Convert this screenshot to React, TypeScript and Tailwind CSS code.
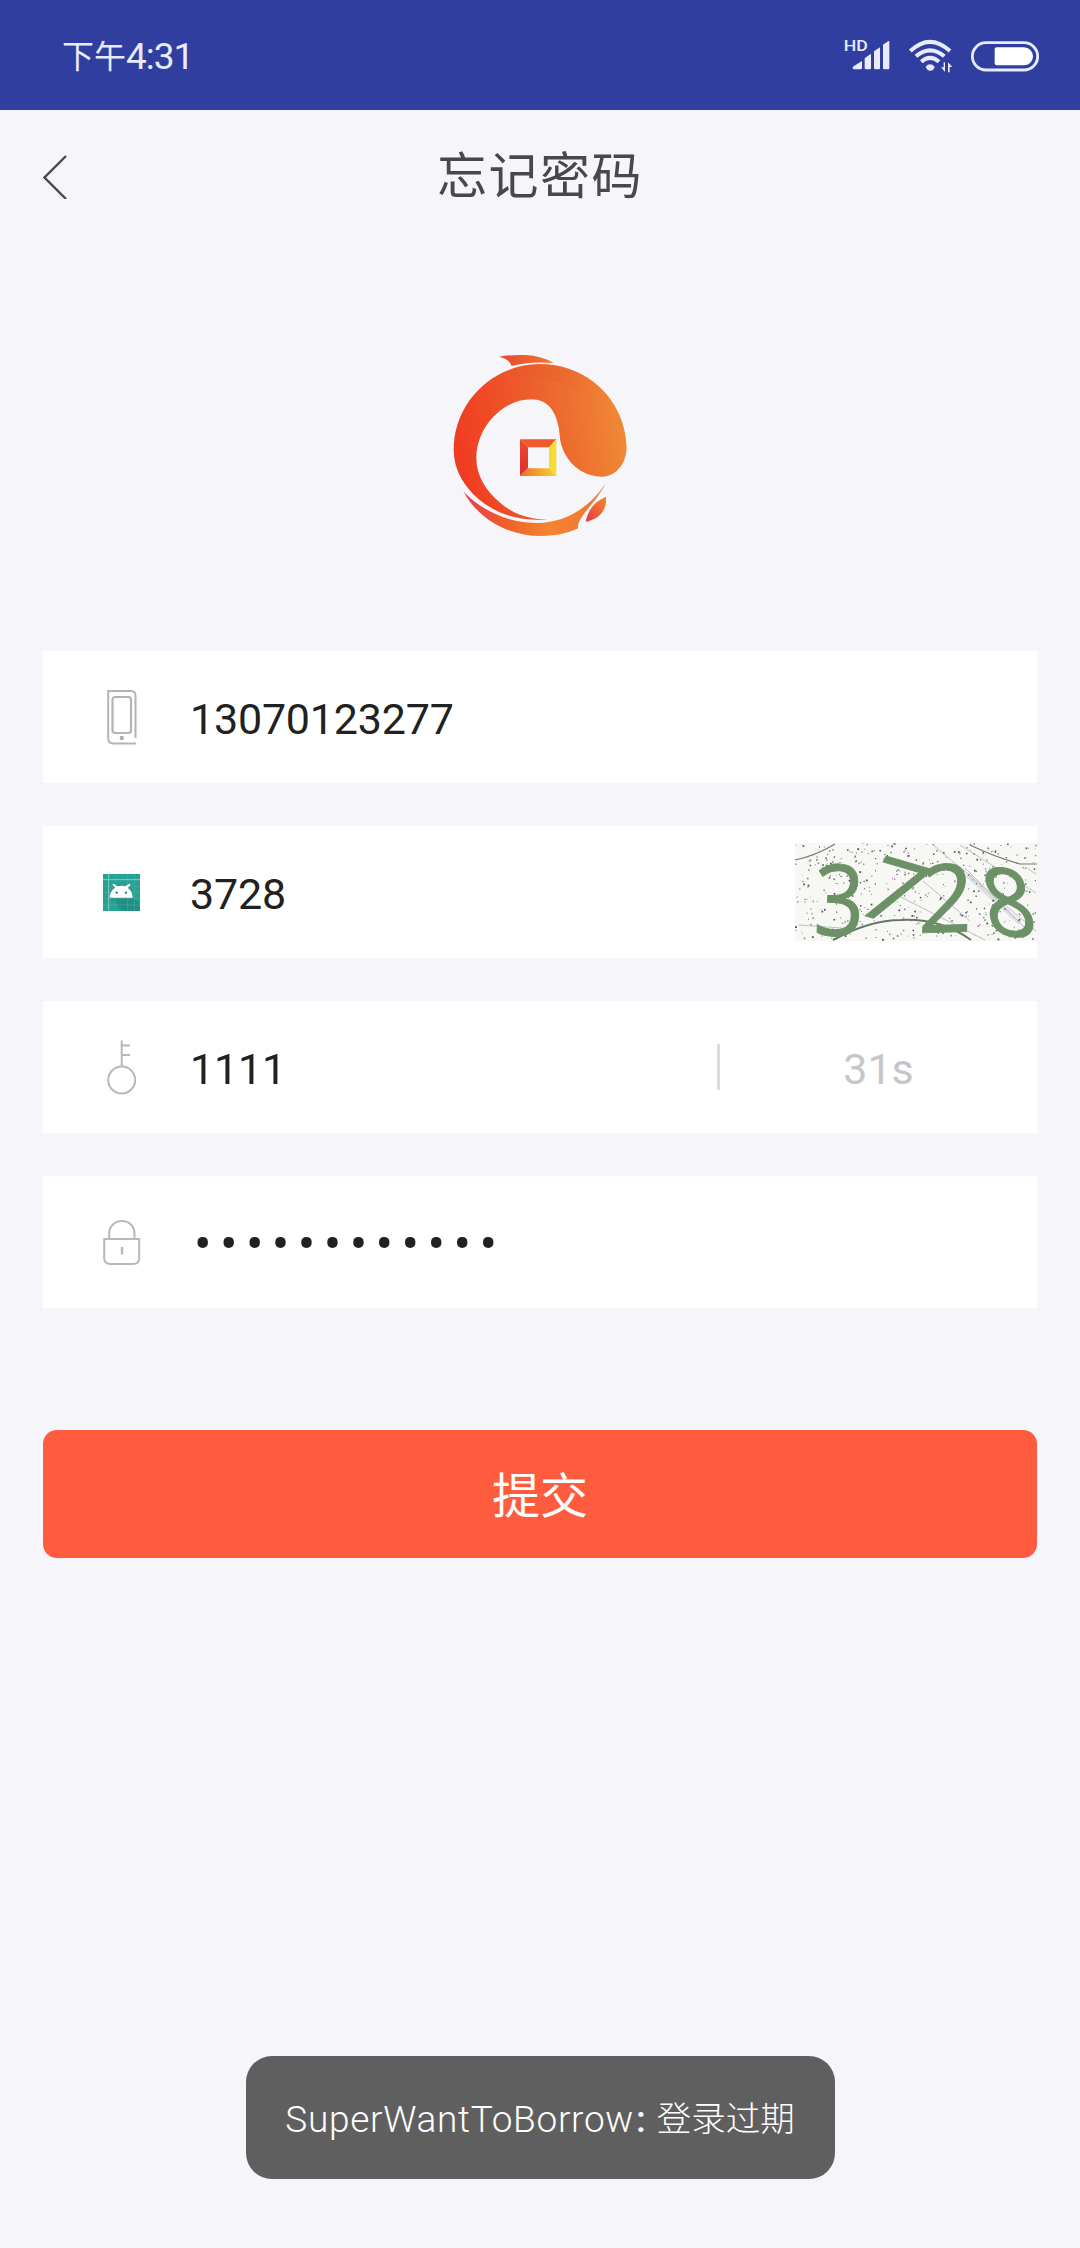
import type { ReactNode } from "react";

const CJK = "font-['Roboto','Noto_Sans_CJK_SC',sans-serif]";

function SignalIcon() {
  return (
    <svg className="w-[47px] h-[35px] overflow-visible" viewBox="69 50 141 105" fill="#e8eafd">
      <text x="71" y="90" fontSize="44" fontWeight="500" fontFamily="Roboto, sans-serif" textLength="72" lengthAdjust="spacingAndGlyphs">HD</text>
      <path d="M98 140q0-4 4-6l24-15v21q0 4-4 4h-20q-4 0-4-4z" />
      <path d="M134 111l19-14v43q0 4-4 4h-11q-4 0-4-4z" />
      <path d="M162 90l18-12v62q0 4-4 4h-10q-4 0-4-4z" />
      <path d="M189 70l15-10q4-2 4 2v78q0 4-4 4h-11q-4 0-4-4z" />
    </svg>
  );
}

function WifiIcon() {
  return (
    <svg className="w-[46px] h-[35px]" viewBox="264 50 138 105" fill="none" stroke="#e8eafd" strokeWidth="12">
      <path d="M271 89Q330 34 390 89" />
      <path d="M288 105Q330 69 373 105" />
      <path d="M304 121Q330 98 357 121" />
      <path d="M317 136q13-14 27 0q-3 12-13 12t-14-12z" fill="#e8eafd" stroke="none" />
      <path d="M375 123v29l-12-14h8v-15zM384 153v-30l13 14h-8v16z" fill="#e8eafd" stroke="none" />
    </svg>
  );
}

function BatteryIcon() {
  return (
    <svg className="w-[69px] h-[35px]" viewBox="450 50 207 105">
      <rect x="457" y="64" width="196" height="82" rx="41" fill="none" stroke="#e8eafd" strokeWidth="8.5" />
      <path d="M530 78h82a27 27 0 0 1 0 54h-82q-6 0-6-6v-42q0-6 6-6z" fill="#fff" />
    </svg>
  );
}

function Logo() {
  return (
    <svg className="w-[174px] h-[183px]" viewBox="40 42 522 549">
      <defs>
        <linearGradient id="body" x1="0" y1="0.55" x2="1" y2="0.4">
          <stop offset="0" stopColor="#ee3a24" />
          <stop offset="0.14" stopColor="#f04423" />
          <stop offset="0.5" stopColor="#ec5f2c" />
          <stop offset="1" stopColor="#f08a36" />
        </linearGradient>
        <linearGradient id="shade" x1="0" y1="0" x2="1" y2="0.5">
          <stop offset="0" stopColor="#e9452a" stopOpacity="0" />
          <stop offset="0.5" stopColor="#e55a2c" stopOpacity="0.55" />
          <stop offset="1" stopColor="#f08a36" stopOpacity="0" />
        </linearGradient>
        <linearGradient id="tail" x1="0" y1="0" x2="1" y2="0">
          <stop offset="0" stopColor="#e83a52" />
          <stop offset="0.25" stopColor="#ee5a2c" />
          <stop offset="0.6" stopColor="#f5842f" />
          <stop offset="1" stopColor="#ee7434" />
        </linearGradient>
        <linearGradient id="fin" x1="0" y1="0" x2="1" y2="0">
          <stop offset="0" stopColor="#e9452f" />
          <stop offset="1" stopColor="#f07a30" />
        </linearGradient>
        <linearGradient id="leaf" x1="0" y1="1" x2="1" y2="0">
          <stop offset="0" stopColor="#e5334d" />
          <stop offset="0.6" stopColor="#f06a30" />
          <stop offset="1" stopColor="#f08a3a" />
        </linearGradient>
        <linearGradient id="coinBottom" x1="0" y1="0" x2="1" y2="0">
          <stop offset="0" stopColor="#ee6a2b" />
          <stop offset="1" stopColor="#f6d92f" />
        </linearGradient>
        <linearGradient id="coinLeft" x1="0" y1="0" x2="0" y2="1">
          <stop offset="0" stopColor="#ea4a2b" />
          <stop offset="1" stopColor="#dd2f2c" />
        </linearGradient>
      </defs>
      <path
        d="M325 539C260 538 215 518 181 488C138 452 109 405 110 352C112 258 190 178 275 178C325 178 348 215 357 262C361 285 360 300 366 318C385 375 432 409 486 410C535 408 561 365 561 320C556 178 442 73 302 72C158 72 42 188 42 330C43 385 66 425 100 462C150 512 222 545 325 539Z"
        fill="url(#body)"
      />
      <path d="M120 150C200 100 340 100 440 165C500 205 530 260 552 340C560 190 450 74 302 72C225 72 165 105 120 150Z" fill="url(#shade)" opacity="0.6" />
      <path
        d="M72 455C112 532 200 588 306 588C350 588 390 578 415 565C413 528 462 500 498 430C450 505 375 547 296 549C215 549 135 520 72 455Z"
        fill="url(#tail)"
      />
      <path d="M438 545C446 508 466 483 499 470C503 508 480 538 438 545Z" fill="url(#leaf)" />
      <path d="M178 50C200 46 225 44 258 45C290 47 318 55 342 69C295 65 252 68 216 78C210 62 198 55 178 50Z" fill="url(#fin)" />
      <path d="M241 298H350L328 322H265Z" fill="#ee5a2b" />
      <path d="M241 298L265 322V385L241 408Z" fill="url(#coinLeft)" />
      <path d="M241 408L265 385H328L352 408Z" fill="url(#coinBottom)" />
      <path d="M350 298V408L328 385V322Z" fill="#f2dc35" />
    </svg>
  );
}

function PhoneIcon() {
  return (
    <svg className="w-[30px] h-[56px]" viewBox="0 0 30 56" fill="none" stroke="#b4b4b4" strokeWidth="2">
      <path d="M1.200 2H24q4.500 0 4.500 5V49M1.200 1V49q0 5.500 5 5.500H29" />
      <rect x="5.500" y="8" width="18.500" height="36" rx="2.500" strokeWidth="2.200" />
      <circle cx="14.800" cy="49" r="2.200" fill="#b0b0b0" stroke="none" />
    </svg>
  );
}

function AndroidIcon() {
  return (
    <svg className="w-[37px] h-[37px]" viewBox="0 0 111 111">
      <path d="M0 0H111V111H0Z" fill="#26a193" />
      <path d="M22 71L60 111H111V90L90 70Z" fill="#1b8578" opacity="0.6" />
      <path d="M17 0V111M37 0V111M74 0V111M94 0V111M0 17H111M0 93H111M0 37H111M0 55H111M0 74H111" stroke="#6cc3b8" strokeWidth="1.500" opacity="0.65" />
      <path d="M17 0V111M0 17H111" stroke="#a4dbd4" strokeWidth="2" />
      <path d="M20 71C21 55 28 46 37 41L28 31L32 29L43 37Q55 33 67 37L79 29L83 32L74 42C83 48 88 56 89 71Z" fill="#fff" />
      <circle cx="41" cy="56" r="3.500" fill="#26806f" />
      <circle cx="69" cy="56" r="3.500" fill="#26806f" />
    </svg>
  );
}

function KeyIcon() {
  return (
    <svg className="w-[30px] h-[56px]" viewBox="0 0 30 56" fill="none" stroke="#b8b8b8" strokeWidth="2">
      <path d="M14.700 1.500V27.500M14.700 6.500H23M14.700 16H23" />
      <circle cx="14.700" cy="41" r="13.500" />
    </svg>
  );
}

function LockIcon() {
  return (
    <svg className="w-[38px] h-[46px]" viewBox="0 0 38 46" fill="none" stroke="#b8b8b8" strokeWidth="2">
      <path d="M1.200 20H36.200V39q0 6-6 6H7.200q-6 0-6-6ZM6.200 20V14.500C6.200 7 12 2 19 2S31.500 7 31.500 14.500V20" />
      <path d="M19 28V35.500" strokeWidth="2.400" />
    </svg>
  );
}

function specks(count: number) {
  let seed = 37;
  const next = () => {
    seed = (seed * 16807) % 2147483647;
    return seed / 2147483647;
  };
  const colors = ["#4b5663", "#7f8a86", "#a77f8e", "#5b4a73", "#8fb59a", "#3d4a44"];
  return Array.from({ length: count }, () => ({
    x: next() * 240,
    y: next() * 96,
    s: 0.8 + next() * 1,
    color: colors[Math.floor(next() * colors.length)],
  }));
}

function Captcha() {
  return (
    <svg className="w-[242px] h-[98px] overflow-visible" viewBox="0 0 242 98">
      <rect width="242" height="98" fill="#f7f8f4" />
      <path d="M0 17Q20 13 40 1M175 2Q200 14 225 21H242" fill="none" stroke="#747a74" strokeWidth="1.200" />
      <g stroke="#a9b0bd" strokeWidth="1" opacity="0.75">
        <path d="M137 1L241 88M165 2L241 50M170 25L235 90M128 38L175 78M106 54L190 97M4 82L60 86M230 24L241 31" />
        <path d="M172 32L225 80" strokeWidth="4" opacity="0.45" />
      </g>
      {specks(430).map((p, i) => (
        <rect key={i} x={p.x} y={p.y} width={p.s} height={p.s} fill={p.color} />
      ))}
      <path d="M38 97Q75 77 106 77Q145 75 176 97" fill="none" stroke="#677568" strokeWidth="2" />
      <g fill="#6c9167" stroke="#6c9167" strokeWidth="1" fontFamily="'Open Sans', sans-serif" fontWeight="400" fontSize="100">
        <text transform="matrix(0.88 0.02 -0.03 0.99 18 92)">3</text>
        <text transform="matrix(0.93 0.27 -0.42 0.8 57 69)">7</text>
        <text transform="matrix(0.94 -0.03 -0.03 0.95 123 90)">2</text>
        <text transform="matrix(0.9 0.08 0.17 0.95 194 91)">8</text>
      </g>
    </svg>
  );
}

function Field({ icon, value, children }: { icon: ReactNode; value: ReactNode; children?: ReactNode }) {
  return (
    <div className="flex h-[132px] items-center bg-white pl-[43px]">
      <div className="flex w-[71px] justify-center">{icon}</div>
      <div className="ml-[33px] flex-1 pt-[4px] text-[43px] leading-none tracking-[-0.2px] text-[#212121]">{value}</div>
      {children}
    </div>
  );
}

export default function App() {
  return (
    <div className={`flex h-[2248px] w-[1080px] flex-col bg-[#f5f5fa] ${CJK}`}>
      <div className="flex h-[110px] items-center justify-between bg-[#303f9f] pr-[41px] pl-[62px] text-[#e8eafd]">
        <div className="flex items-center pt-[3px] leading-none">
          <span className="text-[32px]">下午</span>
          <span className="text-[37px] tracking-[-1px]">4:31</span>
        </div>
        <div className="flex items-center">
          <SignalIcon />
          <div className="ml-[18px] flex"><WifiIcon /></div>
          <div className="ml-4 flex"><BatteryIcon /></div>
        </div>
      </div>

      <div className="grid h-[134px] grid-cols-3 items-center px-[43px]">
        <svg className="h-[44px] w-[24px]" viewBox="0 0 24 44" fill="none" stroke="#47474d" strokeWidth="2.400">
          <path d="M23 1L1.500 22.500L23 44" />
        </svg>
        <h1 className="text-center text-[50px] leading-none tracking-[1.500px] whitespace-nowrap text-[#47474d]">忘记密码</h1>
      </div>

      <div className="mt-[110px] flex justify-center">
        <Logo />
      </div>

      <div className="mx-[43px] mt-[114px] flex flex-col gap-[43px]">
        <Field icon={<PhoneIcon />} value="13070123277" />
        <Field icon={<AndroidIcon />} value="3728">
          <Captcha />
        </Field>
        <Field icon={<KeyIcon />} value="1111">
          <div className="h-[46px] w-[3px] bg-[#dcdcdc]" />
          <div className="w-[317px] pt-[4px] text-center text-[43px] leading-none text-[#c6c6c8]">31s</div>
        </Field>
        <Field icon={<LockIcon />} value={<div className="ml-1 pt-[2px] text-[52px] leading-none tracking-[8.4px]">••••••••••••</div>} />
      </div>

      <button className="mx-[43px] mt-[122px] h-[128px] rounded-[14px] bg-[#ff5c3f] pt-[6px] text-[48px] leading-none text-white">提交</button>

      <div className="mt-[498px] flex h-[123px] w-[589px] items-center justify-center self-center rounded-[26px] bg-[#5f5f5f] pt-[3px] text-white">
        <span className="text-[37px] leading-none font-light tracking-[0.7px]">SuperWantToBorrow</span>
        <span className="ml-[2px] text-[37px] leading-none font-medium">:</span>
        <span className="ml-[11px] text-[34.5px] leading-none font-light">登录过期</span>
      </div>
    </div>
  );
}
